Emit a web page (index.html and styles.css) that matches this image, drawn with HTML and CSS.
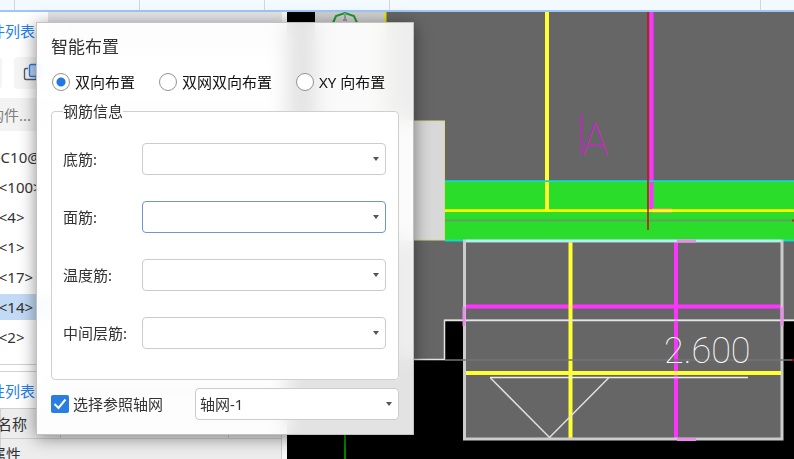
FILE: index.html
```html
<!DOCTYPE html>
<html lang="zh-CN">
<head>
<meta charset="utf-8">
<title>智能布置</title>
<link rel="stylesheet" href="styles.css">
</head>
<body>
<div class="app">
  <header class="ribbon">
    <span class="group group-first"></span><span class="group"></span><span class="group"></span><span class="group"></span><span class="group group-wide"></span>
  </header>
  <main class="workspace">
    <aside class="sidebar">
      <div class="tabs"><a class="tab" href="#list">构件列表</a></div>
      <div class="toolbar">
        <button class="tool" type="button" aria-label="新建"></button>
        <button class="tool" type="button" aria-label="复制">
          <svg width="20" height="20" viewBox="0 0 20 20" fill="none">
            <path d="M5 5.500H3A1.500 1.500 0 0 0 1.500 7V15A1.500 1.500 0 0 0 3 16.500H12A1.500 1.500 0 0 0 13.500 15V14" stroke="#555b6b" stroke-width="1.400"/>
            <rect x="6.500" y="1.500" width="12" height="12" rx="1.500" fill="#b9d2f7" stroke="#2a7de1" stroke-width="1.400"/>
          </svg>
        </button>
      </div>
      <div class="search"><input type="text" aria-label="搜索构件" placeholder="搜索构件..."></div>
      <ul class="items">
        <li>B-C10@</li>
        <li>B&lt;100&gt;</li>
        <li>B&lt;4&gt;</li>
        <li>B&lt;1&gt;</li>
        <li>B&lt;17&gt;</li>
        <li class="selected">B&lt;14&gt;</li>
        <li>B&lt;2&gt;</li>
      </ul>
      <section class="properties">
        <div class="tabs"><a class="tab" href="#props">属性列表</a></div>
        <table>
          <tr class="head"><th>名称</th><th></th><th></th></tr>
          <tr><td class="group-name" colspan="3">属性</td></tr>
        </table>
      </section>
    </aside>
    <div class="canvas">
      <svg viewBox="287 12 507 447" preserveAspectRatio="xMinYMin slice" width="100%" height="100%">
        <rect x="287" y="12" width="507" height="447" fill="#000"/>
        <rect x="315" y="12" width="71" height="228" fill="#cfcfcf"/>
        <path d="M386 12H794V320H444V359H386Z" fill="#666"/>
        <path d="M385.500 12V121" stroke="#e6e600" stroke-width="2"/>
        <path d="M332 25L336 16L345 13L354 16L358 25" fill="none" stroke="#1c9a2c" stroke-width="2"/>
        <path d="M345 13V19M343 20H347" stroke="#999" stroke-width="2"/>
        <path d="M345 434V459" stroke="#008400" stroke-width="2"/>
        <rect x="386" y="121" width="58.500" height="119" fill="#d8d8d8" stroke="#dcd98e"/>
        <rect x="445" y="181" width="349" height="60" fill="#2bdd2b"/>
        <path d="M547 12V210" stroke="#ffff33" stroke-width="4"/>
        <path d="M651.500 12V210" stroke="#ff33ff" stroke-width="4"/>
        <path d="M445 181.200H794M445 240.500H794" stroke="#10dcc8" stroke-width="1.800"/>
        <path d="M652 210.500H672" stroke="#b0a080" stroke-width="5"/>
        <path d="M445 210.700H794" stroke="#ffff00" stroke-width="2.800"/>
        <path d="M445 220.500H794" stroke="#5fa35f" stroke-width="2"/>
        <path d="M648 12V230" stroke="#c01818" stroke-opacity=".8" stroke-width="2"/>
        <path d="M792 220.500H794" stroke="#b03020" stroke-width="2"/>
        <path d="M581.500 114V153" stroke="#b32fb3" stroke-width="2"/>
        <text class="axis-mark" x="582" y="155">A</text>
        <rect x="464.500" y="241" width="317" height="198" fill="#666"/>
        <path d="M413 359.500H444.500V320.500H794" fill="none" stroke="#e4e4e4" stroke-width="1.500"/>
        <path d="M466 306.500H782M676 241V439" stroke="#ff33ff" stroke-width="4"/>
        <path d="M570.500 241V439" stroke="#ffff33" stroke-width="4"/>
        <path d="M444 320.300H794" stroke="#e4e4e4" stroke-width="1.500"/>
        <rect x="464.500" y="241" width="317.500" height="198" fill="none" stroke="#ccc" stroke-width="3"/>
        <path d="M466 240.800H781" stroke="#a5fafa" stroke-width="2"/>
        <path d="M464 307V326M782 307V326M677 241H696M677 439.500H696" stroke="#e88ee8" stroke-width="3"/>
        <path d="M445 360H794" stroke="#747474" stroke-opacity=".75" stroke-width="2"/>
        <path d="M792 360H794" stroke="#900" stroke-width="2"/>
        <path d="M466 373H781" stroke="#ffff33" stroke-width="4"/>
        <path d="M608.500 378L549.500 437.500L490.500 378" fill="none" stroke="#e0e0e0" stroke-width="1.500"/>
        <path d="M490 377.600H748" stroke="#eee" stroke-width="1.500"/>
        <text class="level" x="664" y="363">2.600</text>
      </svg>
    </div>
  </main>

  <form class="dialog" aria-labelledby="dlg-title">
    <h1 id="dlg-title">智能布置</h1>
    <div class="modes">
      <label><input type="radio" name="mode" checked>双向布置</label>
      <label><input type="radio" name="mode">双网双向布置</label>
      <label><input type="radio" name="mode">XY 向布置</label>
    </div>
    <fieldset>
      <legend>钢筋信息</legend>
      <div class="field"><label for="bottom">底筋:</label><span class="combo"><select id="bottom"><option></option></select></span></div>
      <div class="field"><label for="top">面筋:</label><span class="combo active"><select id="top"><option></option></select></span></div>
      <div class="field"><label for="temp">温度筋:</label><span class="combo"><select id="temp"><option></option></select></span></div>
      <div class="field"><label for="middle">中间层筋:</label><span class="combo"><select id="middle"><option></option></select></span></div>
    </fieldset>
    <div class="footer">
      <span class="check">
        <input type="checkbox" id="ref" checked>
        <svg width="18" height="18" viewBox="0 0 18 18" fill="none"><path d="M3.500 9L7.500 13L14.500 4.500" stroke="#fff" stroke-width="2"/></svg>
      </span>
      <label for="ref">选择参照轴网</label>
      <span class="combo"><select aria-label="参照轴网"><option>轴网-1</option></select></span>
    </div>
  </form>
</div>
</body>
</html>
```
FILE: styles.css
```css
* { box-sizing: border-box; }

body {
  margin: 0;
  font: 15px/20px "Noto Sans", "Noto Sans CJK SC", sans-serif;
  color: #333;
}

button, input, select { font: inherit; color: inherit; margin: 0; }

.app {
  position: relative;
  display: flex;
  flex-direction: column;
  height: 100vh;
  overflow: hidden;
}

.ribbon {
  display: flex;
  flex: none;
  height: 12px;
  background: #f2faff;
  border-bottom: 2px solid #9dc8f3;
}
.group { width: 125px; border-right: 1px solid #d2d6da; }
.group-first { width: 15px; }
.group-wide { width: 371px; }

.workspace {
  display: grid;
  grid-template-columns: 287px 1fr;
  flex: 1;
  min-height: 0;
}

/* Component list and properties */
.sidebar {
  overflow: hidden;
  background: #fff;
  border-right: 5px solid #f8f8f8;
}
.tabs { display: flex; height: 38px; background: #e5e5e8; }
.tab {
  width: 48px;
  padding: 9px 0;
  background: #fff;
  color: #1f80ee;
  text-decoration: none;
  white-space: nowrap;
  text-indent: -25px;
}
.toolbar { display: flex; gap: 12px; margin-left: -42px; padding: 7px 0 9px; }
.tool {
  width: 44px;
  height: 32px;
  padding: 5px 9px;
  border: 0;
  border-radius: 4px;
  background: #f4f4f4;
}
.tool svg { display: block; }
.search input {
  display: block;
  width: 100%;
  height: 33px;
  padding: 0;
  border: 0;
  background: #f3f3f3;
  text-indent: -41px;
}
.search input::placeholder { color: #808080; }
.items { margin: 13px 0 14px; padding: 0; list-style: none; }
.items li {
  height: 26px;
  margin-bottom: 4px;
  line-height: 26px;
  text-indent: -11px;
  white-space: nowrap;
}
.items li:first-child { text-indent: -14px; }
.items .selected { background: #c2daf5; }
.properties { padding-top: 6px; border-top: 1px solid #d0d0d0; }
.properties .tabs { height: 37px; border-top: 1px solid #d0d0d0; }
table {
  width: 282px;
  table-layout: fixed;
  border-collapse: collapse;
  background: #f4f4f4;
}
th, td {
  height: 30px;
  padding: 0;
  border: 1px solid #d0d0d0;
  background: #ededee;
  font-weight: 400;
  text-align: left;
  text-indent: -4px;
}
th:first-child { width: 60px; }
th:last-child { width: 53px; }
.group-name { text-indent: -10px; }

/* Drawing area */
.canvas { min-width: 0; overflow: hidden; background: #000; }
.canvas svg { display: block; }
.canvas text { font-family: Roboto, "Noto Sans", sans-serif; font-weight: 100; }
.axis-mark { font-size: 44px; fill: #d51cd5; }
.level { font-size: 36px; fill: #fff; }

/* Floating dialog */
.dialog {
  position: absolute;
  top: 22px;
  left: 36px;
  width: 378px;
  padding: 14px;
  border: 1px solid #c2c2c2;
  background: rgba(255, 255, 255, .89);
  backdrop-filter: blur(10px);
  box-shadow: 0 3px 16px rgba(0, 0, 0, .45);
}
h1 { margin: 0; font-size: 17px; font-weight: 400; line-height: 20px; }
.modes { display: flex; gap: 24px; margin: 15px 0 9px; color: #111; }
.modes label { display: flex; align-items: center; gap: 5px; white-space: nowrap; }
.modes input {
  width: 18px;
  height: 18px;
  border: 1px solid #929292;
  border-radius: 50%;
  background: #fff;
  appearance: none;
}
.modes label:first-child { margin-left: 1px; }
.modes input:checked { background: radial-gradient(circle, #2378df 4px, #fff 5px); }

fieldset {
  position: relative;
  display: flex;
  flex-direction: column;
  gap: 26px;
  margin: 0;
  padding: 22px 12px 30px 11px;
  border: 1px solid #cfcfcf;
  border-radius: 4px;
  background: #fff;
}
legend { padding: 0; }
.field { display: flex; align-items: center; }
.field label { width: 79px; }
.combo { position: relative; display: block; flex: 1; }
.combo select {
  display: block;
  width: 100%;
  height: 32px;
  padding: 0 20px 0 4px;
  border: 1px solid #cbcbcb;
  border-radius: 4px;
  background: #fff;
  appearance: none;
}
.combo.active select { border-color: #6f92db; }
.combo::after {
  content: "";
  position: absolute;
  top: 14px;
  right: 7px;
  border: 3px solid transparent;
  border-top: 4px solid #4c5566;
  border-bottom: 0;
  pointer-events: none;
}
.footer { display: flex; align-items: center; margin-top: 8px; }
.footer label { margin: 0 32px 0 4px; white-space: nowrap; }
.check { position: relative; width: 18px; height: 18px; }
.check input {
  display: block;
  width: 18px;
  height: 18px;
  border-radius: 2px;
  background: #2a7de1;
  appearance: none;
}
.check svg { position: absolute; inset: 0; pointer-events: none; }
```
